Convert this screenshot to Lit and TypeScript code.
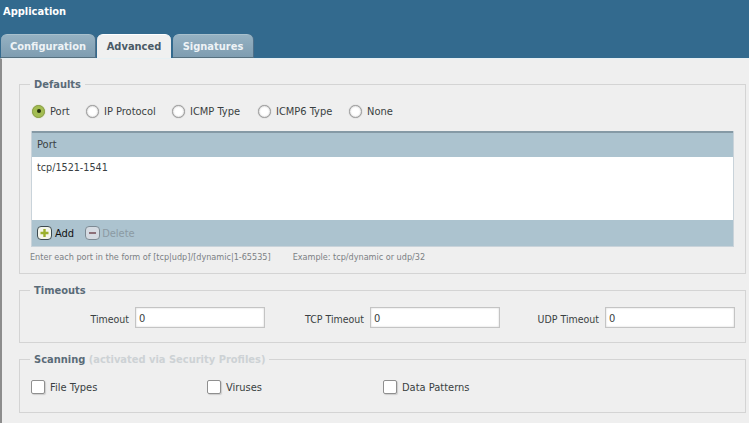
import { LitElement, html, css } from "lit";
import { customElement } from "lit/decorators.js";

@customElement("app-root")
export class AppRoot extends LitElement {
  static styles = css`
    :host { display: block; width: 749px; height: 423px; overflow: hidden; background: #efefef; font-family: "DejaVu Sans", sans-serif; font-size: 11px; color: #3a3f42; font-stretch: condensed; }
    .head { height: 58px; background: #336a8e; box-sizing: border-box; display: flex; flex-direction: column; justify-content: space-between; }
    .title { color: #fff; font-weight: bold; font-size: 11px; padding: 6px 0 0 3px; line-height: 12px; }
    .tabs { display: flex; gap: 2px; padding-left: 1px; height: 24px; }
    .tab { box-sizing: border-box; height: 24px; border-radius: 6px 6px 0 0; font-weight: bold; font-size: 11px; line-height: 23px; text-align: center; color: #eef3f6; background: linear-gradient(#95b1c2, #7e9db1); border-top: 1px solid #a8c0cd; border-bottom: 1px solid #56707f; box-shadow: 1px 0 0 #4f7089; }
    .tab.active { background: #f0f0f0; color: #4a5a66; border-top-color: #fff; border-bottom-color: #f0f0f0; box-shadow: none; }
    .body { box-sizing: border-box; height: 365px; border-left: 2px solid #8d8d8d; border-top: 1px solid #e6f0f4; padding: 18px 0 0 17px; display: flex; flex-direction: column; }
    fieldset { margin: 0; padding: 0; border: 1px solid #d4d4d4; width: 727px; box-sizing: border-box; min-width: 0; }
    legend { margin-left: 10px; padding: 2px 4px 0; font-weight: bold; font-size: 11px; line-height: 12px; color: #5a6b78; }
    legend span { color: #cdd2d5; }
    .defaults { height: 197px; }
    .radios { display: grid; grid-template-columns: 54px 86px 86px 91px auto; align-items: center; height: 20px; margin-top: 10px; padding-left: 12px; }
    .radio { display: flex; align-items: center; gap: 5px; }
    .dot { width: 13px; height: 13px; border-radius: 50%; box-sizing: border-box; border: 1px solid #a0a0a0; background: #fff; box-shadow: inset 0 0 2px #bbb, 0 0 1px #999; display: flex; align-items: center; justify-content: center; }
    .dot.on { background: #a3bd52; border-color: #8ba04a; box-shadow: 0 0 1px #9db04f; }
    .dot.on i { width: 4px; height: 4px; background: #23300c; border-radius: 50%; }
    .grid { margin: 10px 0 0 11px; width: 703px; height: 116px; background: #fff; display: flex; flex-direction: column; border: 1px solid #c9d3da; border-top: 0; box-sizing: border-box; }
    .gh { height: 26px; box-sizing: border-box; background: #acc3cf; border-top: 2px solid #8599a5; padding-left: 5px; line-height: 23px; }
    .gb { flex: 1; padding: 5px 5px 0; line-height: 12px; font-size: 10.7px; }
    .gf { height: 26px; background: #acc3cf; display: flex; align-items: center; padding-left: 5px; }
    .btn { display: flex; align-items: center; gap: 3px; margin-right: 11px; color: #111; }
    .btn.dis { color: #8b9aa3; }
    .btn.dis svg { margin-right: -1px; }
    .btn svg { display: block; }
    .hint { margin: 4px 0 0 10px; font-size: 9px; color: #7b8084; line-height: 12px; display: flex; gap: 22px; }
    .timeouts { height: 60px; margin-top: 9px; }
    .tr { display: grid; grid-template-columns: 245px 235px 235px; margin-top: 10px; }
    .tf { display: flex; justify-content: flex-end; align-items: center; gap: 6px; }
    .lab { font-size: 10.5px; padding-top: 2px; }
    .inp { width: 130px; height: 21px; box-sizing: border-box; border: 1px solid #c4c4c4; background: #fff; box-shadow: inset 0 0 2px #ccc; padding: 1px 0 0 3px; line-height: 20px; }
    .scanning { height: 61px; margin-top: 9px; }
    .checks { display: flex; margin-top: 13px; padding-left: 11px; }
    .check { width: 176px; display: flex; align-items: center; gap: 5px; }
    .check span { padding-top: 2px; }
    .box { width: 14px; height: 14px; box-sizing: border-box; border: 1px solid #8f8f8f; border-radius: 2px; background: #fff; box-shadow: 1px 1px 1px #ccc; }
  `;

  render() {
    const radios = ["Port", "IP Protocol", "ICMP Type", "ICMP6 Type", "None"];
    return html`
      <div class="head">
        <div class="title">Application</div>
        <div class="tabs">
          <div class="tab" style="width:94px">Configuration</div>
          <div class="tab active" style="width:74px">Advanced</div>
          <div class="tab" style="width:80px">Signatures</div>
        </div>
      </div>
      <div class="body">
        <fieldset class="defaults">
          <legend>Defaults</legend>
          <div class="radios">
            ${radios.map((r, i) => html`<div class="radio"><div class="dot ${i === 0 ? "on" : ""}"><i></i></div>${r}</div>`)}
          </div>
          <div class="grid">
            <div class="gh">Port</div>
            <div class="gb">tcp/1521-1541</div>
            <div class="gf">
              <div class="btn">
                <svg width="15" height="14" viewBox="0 0 15 14"><rect x=".5" y=".5" width="14" height="13" rx="3.5" fill="#f4f5ea" stroke="#3d4a50"/><path d="M7.5 3v8M3.5 7h8" stroke="#9bb02c" stroke-width="2.4"/></svg>
                Add
              </div>
              <div class="btn dis">
                <svg width="15" height="14" viewBox="0 0 15 14"><rect x=".5" y=".5" width="14" height="13" rx="3.5" fill="#d5dbe2" stroke="#7d8a94"/><path d="M4 7h7" stroke="#8c6f78" stroke-width="2"/></svg>
                Delete
              </div>
            </div>
          </div>
          <div class="hint"><span>Enter each port in the form of [tcp|udp]/[dynamic|1-65535]</span><span>Example: tcp/dynamic or udp/32</span></div>
        </fieldset>
        <fieldset class="timeouts">
          <legend>Timeouts</legend>
          <div class="tr">
            ${["Timeout", "TCP Timeout", "UDP Timeout"].map((t) => html`<div class="tf"><span class="lab">${t}</span><div class="inp">0</div></div>`)}
          </div>
        </fieldset>
        <fieldset class="scanning">
          <legend>Scanning <span>(activated via Security Profiles)</span></legend>
          <div class="checks">
            ${["File Types", "Viruses", "Data Patterns"].map((t) => html`<div class="check"><div class="box"></div><span>${t}</span></div>`)}
          </div>
        </fieldset>
      </div>
    `;
  }
}
